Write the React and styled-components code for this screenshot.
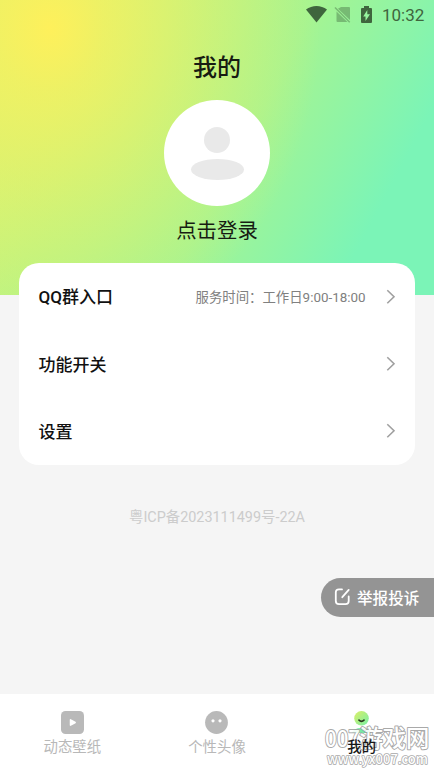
import styled, { createGlobalStyle } from "styled-components";

const GlobalStyle = createGlobalStyle`
  * {
    box-sizing: border-box;
  }
  body {
    margin: 0;
    background: #f5f5f5;
    font-family: Roboto, "Noto Sans CJK SC", sans-serif;
    color: #171c12;
  }
`;
const Page = styled.div`
  position: relative;
  display: flex;
  flex-direction: column;
  width: 434px;
  height: 771px;
  overflow: hidden;
`;
const Header = styled.header`
  display: flex;
  flex-direction: column;
  align-items: center;
  flex: none;
  height: 295px;
  background:
    radial-gradient(
      ellipse 270px 320px at 50px 28px,
      #fef05b 0%,
      rgba(254, 240, 91, 0.72) 20%,
      rgba(254, 240, 91, 0.34) 60%,
      rgba(254, 240, 91, 0) 100%
    ),
    linear-gradient(
      118deg,
      #d2f374 0%,
      #b6f486 29%,
      #a5f492 54%,
      #7bf4b7 83%,
      #7bf4b7 100%
    );
`;
const StatusBar = styled.div`
  display: flex;
  align-items: center;
  align-self: flex-end;
  height: 30px;
  padding-right: 9px;
  color: #3f653d;
`;
const Clock = styled.span`
  width: 43px;
  margin-left: 7px;
  font-size: 17px;
  font-weight: 400;
  line-height: 30px;
  white-space: nowrap;
`;
const Title = styled.h1`
  margin: 20px 0 0;
  font-size: 24px;
  font-weight: 500;
  line-height: 36px;
`;
const Avatar = styled.div`
  display: flex;
  flex-direction: column;
  align-items: center;
  width: 106px;
  height: 106px;
  margin-top: 14px;
  padding-top: 27px;
  border-radius: 50%;
  background: #fff;
`;
const Head = styled.div`
  width: 26px;
  height: 26px;
  border-radius: 50%;
  background: #e9e9e9;
`;
const Shoulders = styled.div`
  width: 53px;
  height: 21px;
  margin-top: 6px;
  border-radius: 50%;
  background: #e9e9e9;
`;
const Login = styled.div`
  margin-top: 10px;
  font-size: 20.4px;
  font-weight: 400;
  line-height: 30px;
`;
const Card = styled.section`
  flex: none;
  margin: -32px 19px 0;
  height: 202px;
  border-radius: 20px;
  background: #fff;
`;
const Row = styled.div`
  display: flex;
  align-items: center;
  height: 67.4px;
  padding: 0 19.5px;
`;
const RowLabel = styled.span`
  flex: 1;
  padding-bottom: 2px;
  color: #111;
  font-size: 17px;
  font-weight: 500;
`;
const RowNote = styled.span`
  margin-right: 20px;
  padding-bottom: 2px;
  color: #808080;
  font-size: 13.4px;
`;
const Icp = styled.div`
  margin-top: 42px;
  color: #ccc;
  font-size: 14.4px;
  line-height: 22px;
  text-align: center;
`;
const Report = styled.button`
  position: absolute;
  top: 578px;
  right: 0;
  display: flex;
  align-items: center;
  gap: 6px;
  width: 113px;
  height: 39px;
  padding: 0 0 2px 13px;
  border: 0;
  border-radius: 20px 0 0 20px;
  background: #949494;
  color: #fff;
  font-family: inherit;
  font-size: 15.6px;
  font-weight: 500;
  white-space: nowrap;
`;
const TabBar = styled.nav`
  display: grid;
  grid-template-columns: repeat(3, 1fr);
  height: 77px;
  margin-top: auto;
  background: #fff;
`;
const Tab = styled.div`
  display: flex;
  flex-direction: column;
  align-items: center;
  padding-top: 17px;
  color: ${(p) => (p.$active ? "#171717" : "#b8b8b8")};
  font-size: 14.4px;
  font-weight: ${(p) => (p.$active ? 500 : 400)};
  line-height: 22px;

  svg {
    margin-bottom: 3px;
  }
`;
const TabLabel = styled.span`
  position: relative;
  z-index: 2;
`;
const Watermark = styled.svg`
  position: absolute;
  right: 0;
  bottom: 0;
  z-index: 1;
  font-family: "Noto Sans CJK SC", sans-serif;
  font-weight: 500;
  fill: #fff;
  stroke: #a0a0a0;
  stroke-linejoin: round;
  paint-order: stroke;
  opacity: 0.9;
`;

const rows = [
  { label: "QQ群入口", note: "服务时间：工作日9:00-18:00" },
  { label: "功能开关" },
  { label: "设置" },
];

function StatusIcons() {
  return (
    <svg width="70" height="30" viewBox="0 0 70 30" fill="currentColor">
      <path d="M1 9.6C7 4.7 16 4.7 22 9.6L11.5 22.5Z" />
      <g opacity=".4">
        <path d="M36 7h8q1 0 1 1v12L33 8.8ZM31.5 11.5L42.4 22h-9.9q-1 0-1-1Z" />
        <path d="M30 7.5L44.7 22.2" stroke="currentColor" strokeWidth="1.5" />
      </g>
      <path
        fillRule="evenodd"
        d="M59 6h5v2h2q1 0 1 1v13q0 1-1 1h-9q-1 0-1-1V9q0-1 1-1h2ZM62.3 10L58.2 16.4h2.3V21L65 14.2h-2.7Z"
      />
    </svg>
  );
}

function Chevron() {
  return (
    <svg width="10" height="16" viewBox="0 0 10 16" fill="none">
      <path d="M1.3 1.3L8 7.8L1.3 14.3" stroke="#a0a0a0" strokeWidth="1.6" />
    </svg>
  );
}

function EditIcon() {
  return (
    <svg width="17" height="20" viewBox="0 0 17 20" fill="none" stroke="#fff" strokeWidth="1.8" strokeLinecap="round">
      <path d="M8 2.4H5Q1.8 2.4 1.8 5.6V13.9Q1.8 17.1 5 17.1H11.5Q14.7 17.1 14.7 13.9V9.5" />
      <path d="M8.3 10.2L14.7 2.9" />
    </svg>
  );
}

function WallpaperIcon() {
  return (
    <svg width="23" height="23" viewBox="0 0 23 23">
      <rect width="23" height="23" rx="4.5" fill="#b9b9b9" />
      <path d="M9.5 8.8L14.2 11.5L9.5 14.2Z" fill="#fff" stroke="#fff" strokeWidth="1.5" strokeLinejoin="round" />
    </svg>
  );
}

function FaceIcon() {
  return (
    <svg width="23" height="23" viewBox="0 0 23 23">
      <circle cx="11.5" cy="11.5" r="11.4" fill="#b9b9b9" />
      <circle cx="8" cy="9.8" r="1.6" fill="#fff" />
      <circle cx="15" cy="9.8" r="1.6" fill="#fff" />
    </svg>
  );
}

function MineIcon() {
  return (
    <svg width="23" height="23" viewBox="0 0 23 23">
      <defs>
        <linearGradient id="mine" x1="0" y1="0" x2="1" y2="1">
          <stop offset="0" stopColor="#dcef68" />
          <stop offset="1" stopColor="#75f0a6" />
        </linearGradient>
      </defs>
      <circle cx="11.5" cy="7.3" r="7.3" fill="url(#mine)" />
      <path d="M9 9.2Q11.5 11.6 14 9.2" fill="none" stroke="#26351d" strokeWidth="1.7" strokeLinecap="round" />
      <path d="M2 22Q3.5 17 11.5 17T21 22Z" fill="#73eda5" />
    </svg>
  );
}

export default function App() {
  return (
    <Page>
      <GlobalStyle />
      <Header>
        <StatusBar>
          <StatusIcons />
          <Clock>10:32</Clock>
        </StatusBar>
        <Title>我的</Title>
        <Avatar>
          <Head />
          <Shoulders />
        </Avatar>
        <Login>点击登录</Login>
      </Header>
      <Card>
        {rows.map((row) => (
          <Row key={row.label}>
            <RowLabel>{row.label}</RowLabel>
            {row.note && <RowNote>{row.note}</RowNote>}
            <Chevron />
          </Row>
        ))}
      </Card>
      <Icp>粤ICP备2023111499号-22A</Icp>
      <Report>
        <EditIcon />
        举报投诉
      </Report>
      <TabBar>
        <Tab>
          <WallpaperIcon />
          <TabLabel>动态壁纸</TabLabel>
        </Tab>
        <Tab>
          <FaceIcon />
          <TabLabel>个性头像</TabLabel>
        </Tab>
        <Tab $active>
          <MineIcon />
          <TabLabel>我的</TabLabel>
        </Tab>
      </TabBar>
      <Watermark width="112" height="50" viewBox="0 0 112 50">
        <text x="3" y="26" fontSize="23" strokeWidth="1.9" textLength="35" lengthAdjust="spacingAndGlyphs">
          007
        </text>
        <text x="37.5" y="26" fontSize="23.3" strokeWidth="1.9">
          游戏网
        </text>
        <text x="5" y="42.5" fontSize="13.5" strokeWidth="1.6" textLength="101" lengthAdjust="spacingAndGlyphs">
          www.yx007.com
        </text>
      </Watermark>
    </Page>
  );
}
